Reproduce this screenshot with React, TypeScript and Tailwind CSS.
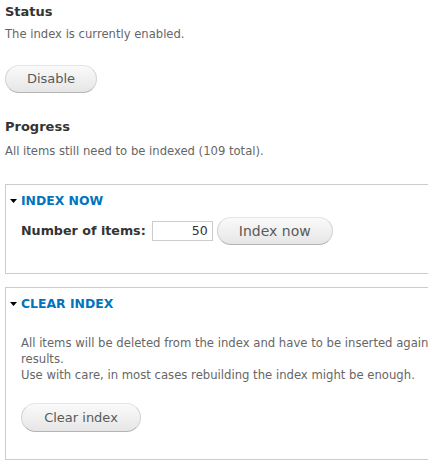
import React from "react";

const font = { fontFamily: '"DejaVu Sans", Verdana, sans-serif' };

function Btn({ label, className = "" }: { label: string; className?: string }) {
  return (
    <button
      className={`block rounded-[20px] border border-[#e4e4e4] border-b-[#b4b4b4] border-x-[#d2d2d2] bg-gradient-to-b from-[#fafafa] to-[#e6e6e6] text-[#5a5a5a] leading-[16px] ${className}`}
    >
      {label}
    </button>
  );
}

function Legend({ label }: { label: string }) {
  return (
    <div className="flex items-center h-[16px] pl-[4px]">
      <svg width="7" height="4" viewBox="0 0 7 4" className="mr-[4px]">
        <polygon points="0,0 7,0 3.5,4" fill="#000" />
      </svg>
      <span className="text-[12.4px] font-bold text-[#0074bd] leading-[16px]">{label}</span>
    </div>
  );
}

export default function App() {
  return (
    <div className="w-[428px] h-[471px] overflow-hidden bg-white" style={font}>
      <div className="w-[1100px] pl-[5px]">
        <h2 className="mt-[2px] text-[13px] font-bold leading-[20px] text-[#333]">Status</h2>
        <p className="mt-[4px] text-[11.6px] leading-[16px] text-[#666]">The index is currently enabled.</p>
        <Btn label="Disable" className="mt-[23px] w-[92px] h-[28px] text-[13px]" />
        <h2 className="mt-[24px] text-[13px] font-bold leading-[20px] text-[#333]">Progress</h2>
        <p className="mt-[6px] text-[11.6px] leading-[16px] text-[#666]">
          All items still need to be indexed (109 total).
        </p>

        <div className="mt-[25px] border border-[#ccc] pt-[8px] pb-[28px]">
          <Legend label="INDEX NOW" />
          <div className="mt-[8px] pl-[15px] flex items-center">
            <span className="text-[12.7px] font-bold text-[#333] leading-[16px]">Number of items:</span>
            <div className="ml-[6px] w-[61px] h-[20px] border border-[#ccc] flex items-center justify-end pr-[4px] text-[12.5px] text-[#333]">
              50
            </div>
            <Btn label="Index now" className="ml-[4px] w-[116px] h-[28px] text-[14px]" />
          </div>
        </div>

        <div className="mt-[13px] border border-[#ccc] pt-[8px] pb-[27px]">
          <Legend label="CLEAR INDEX" />
          <div className="pl-[15px]">
            <p className="mt-[23px] text-[11.65px] leading-[16px] text-[#666] whitespace-nowrap">
              All items will be deleted from the index and have to be inserted again by normally indexing them. Until this is done, searches on this index will return incomplete
              <br />
              results.
              <br />
              Use with care, in most cases rebuilding the index might be enough.
            </p>
            <Btn label="Clear index" className="mt-[20px] w-[120px] h-[29px] text-[13px]" />
          </div>
        </div>
      </div>
    </div>
  );
}
